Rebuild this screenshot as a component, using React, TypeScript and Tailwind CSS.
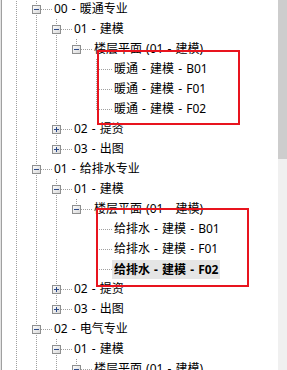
import React from "react";

type Row = { L: number; text: string; kind?: "minus" | "plus"; selected?: boolean };

const rows: Row[] = [
  { L: 0, text: "00 - 暖通专业", kind: "minus" },
  { L: 1, text: "01 - 建模", kind: "minus" },
  { L: 2, text: "楼层平面 (01 - 建模)", kind: "minus" },
  { L: 3, text: "暖通 - 建模 - B01" },
  { L: 3, text: "暖通 - 建模 - F01" },
  { L: 3, text: "暖通 - 建模 - F02" },
  { L: 1, text: "02 - 提资", kind: "plus" },
  { L: 1, text: "03 - 出图", kind: "plus" },
  { L: 0, text: "01 - 给排水专业", kind: "minus" },
  { L: 1, text: "01 - 建模", kind: "minus" },
  { L: 2, text: "楼层平面 (01 - 建模)", kind: "minus" },
  { L: 3, text: "给排水 - 建模 - B01" },
  { L: 3, text: "给排水 - 建模 - F01" },
  { L: 3, text: "给排水 - 建模 - F02", selected: true },
  { L: 1, text: "02 - 提资", kind: "plus" },
  { L: 1, text: "03 - 出图", kind: "plus" },
  { L: 0, text: "02 - 电气专业", kind: "minus" },
  { L: 1, text: "01 - 建模", kind: "minus" },
  { L: 2, text: "楼层平面 (01 - 建模)", kind: "minus" },
];

function hasNextSibling(i: number): boolean {
  const L = rows[i].L;
  for (let j = i + 1; j < rows.length; j++) {
    if (rows[j].L < L) return false;
    if (rows[j].L === L) return true;
  }
  return true;
}

function ancestorContinues(i: number, level: number): boolean {
  for (let j = i - 1; j >= 0; j--) {
    if (rows[j].L === level) return hasNextSibling(j);
    if (rows[j].L < level) return true;
  }
  return true;
}

const LINE = "#a0a0a0";

function VCell({ on }: { on: boolean }) {
  return (
    <svg width={20} height={20} className="shrink-0 block" shapeRendering="crispEdges">
      {on && (
        <line x1={10.5} y1={0} x2={10.5} y2={20} stroke={LINE} strokeWidth={1} strokeDasharray="1 1" />
      )}
    </svg>
  );
}

function NodeCell({ kind, next }: { kind?: "minus" | "plus"; next: boolean }) {
  return (
    <svg width={28} height={20} className="shrink-0 block" shapeRendering="crispEdges">
      <defs>
        <linearGradient id="bx" x1="0" y1="0" x2="1" y2="1">
          <stop offset="0" stopColor="#ffffff" />
          <stop offset="1" stopColor="#d6d6d6" />
        </linearGradient>
      </defs>
      <line x1={10.5} y1={0} x2={10.5} y2={next ? 20 : 11} stroke={LINE} strokeWidth={1} strokeDasharray="1 1" />
      <line x1={kind ? 15 : 11} y1={10.5} x2={27} y2={10.5} stroke={LINE} strokeWidth={1} strokeDasharray="1 1" />
      {kind && (
        <g>
          <rect x={6.5} y={6.5} width={8} height={8} fill="url(#bx)" stroke="#8e8f8f" strokeWidth={1} />
          <line x1={8} y1={10.5} x2={13} y2={10.5} stroke="#2c4a8a" strokeWidth={1} />
          {kind === "plus" && <line x1={10.5} y1={8} x2={10.5} y2={13} stroke="#2c4a8a" strokeWidth={1} />}
        </g>
      )}
    </svg>
  );
}

export default function App() {
  return (
    <div
      className="w-[287px] h-[370px] overflow-hidden bg-white flex text-[12px] text-black [word-spacing:1px]"
      style={{ fontFamily: '"Noto Sans", "Noto Sans CJK SC", sans-serif' }}
    >
      <div className="w-px bg-[#e3e3e3] shrink-0" />
      <div className="w-px bg-[#a0a0a0] shrink-0" />
      <div className="relative flex-1 overflow-hidden">
        <div className="flex flex-col -mt-px pl-[4px]">
          {rows.map((r, i) => {
            const cells = [];
            for (let k = 0; k <= r.L; k++) {
              const on = k === 0 ? true : ancestorContinues(i, k - 1);
              cells.push(<VCell key={k} on={on} />);
            }
            return (
              <div key={i} className="flex h-[20px] items-center whitespace-nowrap">
                {cells}
                <NodeCell kind={r.kind} next={hasNextSibling(i)} />
                {r.selected ? (
                  <span className="bg-[#e5e5e5] font-bold -ml-[2px] px-[2px] h-[19px] leading-[19px]">{r.text}</span>
                ) : (
                  <span className="leading-[20px]">{r.text}</span>
                )}
              </div>
            );
          })}
        </div>
        <div className="absolute left-[95px] top-[50px] w-[143px] h-[75px] border-2 border-[#e8141e]" />
        <div className="absolute left-[94px] top-[208px] w-[153px] h-[79px] border-2 border-[#e8141e]" />
      </div>
      <div className="w-[9px] shrink-0 flex flex-col">
        <div className="h-[159px] bg-[#cdcdcd]" />
        <div className="flex-1 bg-[#f0f0f0]" />
      </div>
    </div>
  );
}
